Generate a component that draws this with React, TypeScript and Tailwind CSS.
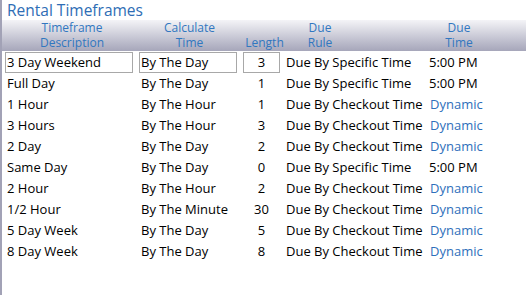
import React from "react";

type Row = {
  name: string;
  calc: string;
  len: number;
  rule: string;
  due: string;
};

const rows: Row[] = [
  { name: "3 Day Weekend", calc: "By The Day", len: 3, rule: "Due By Specific Time", due: "5:00 PM" },
  { name: "Full Day", calc: "By The Day", len: 1, rule: "Due By Specific Time", due: "5:00 PM" },
  { name: "1 Hour", calc: "By The Hour", len: 1, rule: "Due By Checkout Time", due: "Dynamic" },
  { name: "3 Hours", calc: "By The Hour", len: 3, rule: "Due By Checkout Time", due: "Dynamic" },
  { name: "2 Day", calc: "By The Day", len: 2, rule: "Due By Checkout Time", due: "Dynamic" },
  { name: "Same Day", calc: "By The Day", len: 0, rule: "Due By Specific Time", due: "5:00 PM" },
  { name: "2 Hour", calc: "By The Hour", len: 2, rule: "Due By Checkout Time", due: "Dynamic" },
  { name: "1/2 Hour", calc: "By The Minute", len: 30, rule: "Due By Checkout Time", due: "Dynamic" },
  { name: "5 Day Week", calc: "By The Day", len: 5, rule: "Due By Checkout Time", due: "Dynamic" },
  { name: "8 Day Week", calc: "By The Day", len: 8, rule: "Due By Checkout Time", due: "Dynamic" },
];

const cols = "grid grid-cols-[134px_104px_43px_143px_97px]";

export default function App() {
  return (
    <div className="flex h-[295px] w-[526px] overflow-hidden bg-white font-['Open_Sans',sans-serif] text-[13px] font-[500] text-black">
      <div className="w-[2px] shrink-0 bg-[#a2a2b6]" />
      <div className="flex-1">
        <h1 className="h-[20px] pl-[5px] pt-[1px] text-[15.5px] leading-[18px] text-[#2e6db5]">
          Rental Timeframes
        </h1>

        <div
          className={`${cols} h-[31px] bg-gradient-to-b from-[#f4f4f7] to-[#a6a6ba] pl-[3px] text-center text-[12px] leading-[15px] text-[#3177c0]`}
        >
          <div>
            Timeframe
            <br />
            Description
          </div>
          <div className="pr-[3px]">
            Calculate
            <br />
            Time
          </div>
          <div className="pt-[15px]">Length</div>
          <div className="w-[68px]">
            Due
            <br />
            Rule
          </div>
          <div className="w-[60px]">
            Due
            <br />
            Time
          </div>
        </div>

        <div className="pl-[3px] pt-[1px]">
          {rows.map((r, i) => {
            const boxed = i === 0;
            return (
              <div key={i} className={`${cols} h-[21px] items-center leading-[19px]`}>
                <div
                  className={`w-[128px] pl-[1px] ${boxed ? "border border-[#a8a8a8]" : "border border-transparent"}`}
                >
                  {r.name}
                </div>
                <div
                  className={`w-[98px] pl-[1px] ${boxed ? "border border-[#a8a8a8]" : "border border-transparent"}`}
                >
                  {r.calc}
                </div>
                <div
                  className={`w-[37px] text-center ${boxed ? "border border-[#a8a8a8]" : "border border-transparent"}`}
                >
                  {r.len}
                </div>
                <div className="whitespace-nowrap">{r.rule}</div>
                <div
                  className={`whitespace-nowrap ${r.due === "Dynamic" ? "pl-[1px] text-[#2e6fbb]" : ""}`}
                >
                  {r.due}
                </div>
              </div>
            );
          })}
        </div>
      </div>
    </div>
  );
}
